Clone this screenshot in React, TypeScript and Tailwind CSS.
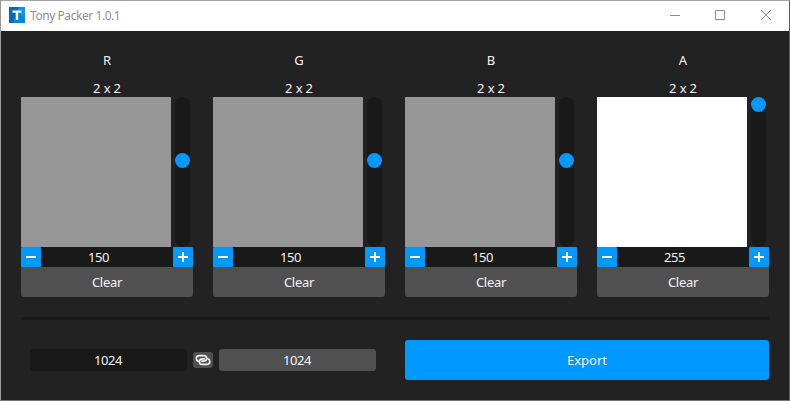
type ChannelProps = { name: string; value: number; fill: string; knob: string };

const channels: ChannelProps[] = [
  { name: 'R', value: 150, fill: 'bg-[#969696]', knob: 'mt-[56px]' },
  { name: 'G', value: 150, fill: 'bg-[#969696]', knob: 'mt-[56px]' },
  { name: 'B', value: 150, fill: 'bg-[#969696]', knob: 'mt-[56px]' },
  { name: 'A', value: 255, fill: 'bg-white', knob: 'mt-0' },
];

function TitleBar() {
  return (
    <header className="flex h-[30px] shrink-0 items-center bg-white">
      <svg className="mb-0.5 ml-2 h-4 w-4 shrink-0" viewBox="0 0 16 16">
        <rect width="16" height="16" fill="#0795f5" />
        <path d="M0 0h10L4 16H0z" fill="#0b67b8" />
        <path d="M6 6h4l6 6v4H6z" fill="#0584df" />
        <path d="M3.5 3.5h9v2.2H9.2V13H6.8V5.7H3.5z" fill="#fff" />
      </svg>
      <h1 className="ml-[5px] whitespace-nowrap text-[12px] leading-4 tracking-[-0.44px] text-[#919191]">Tony Packer 1.0.1</h1>
      <div className="ml-auto mr-px flex h-full">
        <svg className="h-[30px] w-[46px]" viewBox="0 0 46 30" fill="none" stroke="#8c8c8c"><path d="M19 14.5h10" /></svg>
        <svg className="h-[30px] w-[46px]" viewBox="0 0 46 30" fill="none" stroke="#8c8c8c"><path d="M18.5 9.5h9v9h-9z" /></svg>
        <svg className="h-[30px] w-[45px]" viewBox="0 0 45 30" fill="none" stroke="#8c8c8c"><path d="m18 9 10 10m0-10L18 19" /></svg>
      </div>
    </header>
  );
}

function StepButton({ plus = false }: { plus?: boolean }) {
  return (
    <button aria-label={plus ? 'Increase' : 'Decrease'} className="h-5 w-5 shrink-0 rounded-[1px] bg-[#0099ff]">
      <svg className="block h-5 w-5" viewBox="0 0 20 20" fill="none" stroke="#fff" strokeWidth="2">
        <path d={plus ? 'M5 10h10M10 5v10' : 'M5 10h10'} />
      </svg>
    </button>
  );
}

function Channel({ name, value, fill, knob }: ChannelProps) {
  return (
    <section className="flex w-[172px] flex-col">
      <div className="h-5 text-center leading-5">{name}</div>
      <div className="mt-2 h-[19px] text-center leading-5 tracking-[-0.15px]">2 x 2</div>
      <div className="flex h-[150px] gap-1">
        <div className={`w-[150px] ${fill}`} />
        <div className="w-[15px] rounded-full bg-[#191919]">
          <div className={`h-[15px] w-[15px] rounded-full bg-[#0099ff] ${knob}`} />
        </div>
      </div>
      <div className="flex h-5 bg-[#191919]">
        <StepButton />
        <span className="flex-1 pr-[17px] text-center leading-5 tracking-[-0.4px]">{value}</span>
        <StepButton plus />
      </div>
      <button className="h-[30px] rounded-b-[3px] bg-[#505050] leading-[30px] tracking-[-0.3px]">Clear</button>
    </section>
  );
}

export default function App() {
  return (
    <div className="flex h-[401px] w-[790px] flex-col border border-t-[#a5a5a5] border-r-[#5f5d50] border-b-[#77756a] border-l-[#9b9b9b] bg-[#222222] font-['Noto_Sans',sans-serif] text-[13px] text-[#f4f4f4]">
      <TitleBar />
      <main className="flex flex-1 flex-col px-5 pt-[19px]">
        <div className="flex gap-5">
          {channels.map((c) => <Channel key={c.name} {...c} />)}
        </div>
        <div className="mt-5 h-[3px] w-[748px] rounded-full bg-[#191919]" />
        <div className="mt-5 flex h-10 items-center">
          <div className="ml-[9px] h-[22px] w-[157px] rounded-[3px] bg-[#191919] pr-px text-center leading-[22px] tracking-[-0.4px]">1024</div>
          <button aria-label="Link dimensions" className="mx-1.5 h-4 w-5 rounded-[3px] bg-[#505050]">
            <svg className="block h-4 w-5" viewBox="0 0 20 16" fill="none" stroke="#f4f4f4" strokeWidth="1.6" strokeLinecap="round">
              <path d="M5.2 9.3C3.9 8.8 3.2 7.7 3.3 6.3 3.4 4.6 4.8 3.6 6.5 3.6h4.2c1.8 0 3 1.1 3 2.7s-1.2 2.8-3 2.8H8.8" />
              <path d="M14.9 6.7c1.3.5 2 1.6 1.9 3-.1 1.7-1.5 2.7-3.2 2.7H9.4c-1.8 0-3-1.1-3-2.7s1.2-2.8 3-2.8h1.9" />
            </svg>
          </button>
          <div className="h-[22px] w-[157px] rounded-[3px] bg-[#505050] pr-px text-center leading-[22px] tracking-[-0.4px]">1024</div>
          <button className="ml-[29px] h-10 w-[364px] rounded-[3px] bg-[#0099ff] leading-10">Export</button>
        </div>
      </main>
    </div>
  );
}
